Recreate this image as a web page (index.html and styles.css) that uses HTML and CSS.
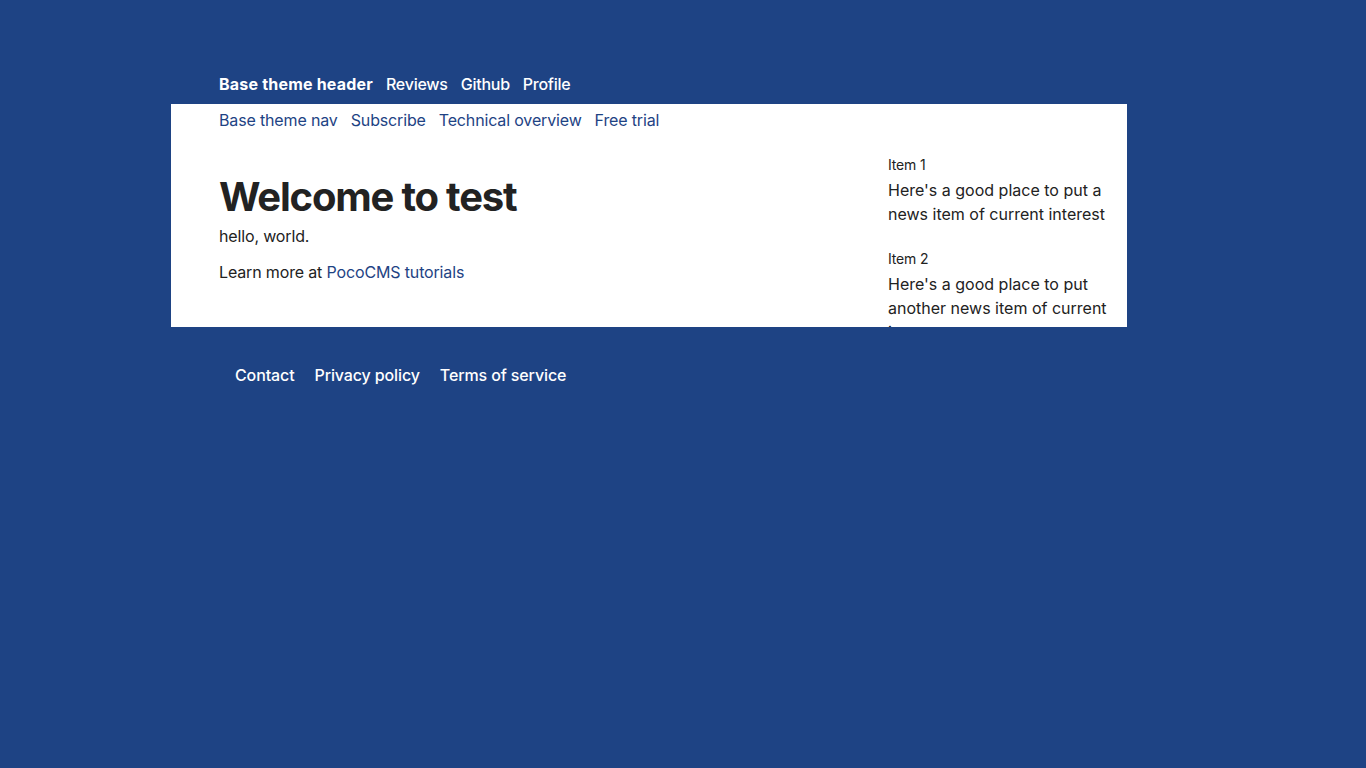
FILE: index.html
```html
<!DOCTYPE html>
<html lang="en">
<head>
  <meta charset="UTF-8" />
  <meta name="viewport" content="width=device-width, initial-scale=1.0"/>
  <title>Welcome to test</title>
  <link rel="stylesheet" href="styles.css">
</head>
<body>
  <div class="page">
    <header class="site-header">
      <a href="#" class="brand">Base theme header</a>
      <a href="#">Reviews</a>
      <a href="#">Github</a>
      <a href="#">Profile</a>
    </header>

    <div class="sheet">
      <nav class="site-nav">
        <a href="#">Base theme nav</a>
        <a href="#">Subscribe</a>
        <a href="#">Technical overview</a>
        <a href="#">Free trial</a>
      </nav>
      <div class="columns">
        <article class="main">
          <h1>Welcome to test</h1>
          <p>hello, world.</p>
          <p>Learn more at <a href="#">PocoCMS tutorials</a></p>
        </article>
        <aside class="news">
          <h4>Item 1</h4>
          <p>Here's a good place to put a news item of current interest</p>
          <h4>Item 2</h4>
          <p>Here's a good place to put another news item of current interest</p>
        </aside>
      </div>
    </div>

    <footer class="site-footer">
      <a href="#">Contact</a>
      <a href="#">Privacy policy</a>
      <a href="#">Terms of service</a>
    </footer>
  </div>
</body>
</html>
```

FILE: styles.css
```css
body {
  background: #1e4384;
  font-family: Inter, "Noto Sans", sans-serif;
  font-size: 16px;
  line-height: 24px;
  letter-spacing: -0.15px;
  color: #222;
  margin: 0;
}

a {
  text-decoration: none;
}

.page {
  width: 1024px;
  margin: 0 auto;
}

.site-header {
  display: flex;
  gap: 13px;
  padding: 72px 0 8px 48px;
}

.site-header a {
  color: #fff;
  font-weight: 500;
  letter-spacing: -0.25px;
}

.site-header .brand {
  font-weight: 700;
  letter-spacing: 0.2px;
}

.sheet {
  background: #fff;
  width: 956px;
  height: 223px;
  overflow: hidden;
}

.site-nav {
  display: flex;
  gap: 13px;
  padding: 4px 0 0 48px;
}

.site-nav a,
.main a {
  color: #1e4384;
}

.columns {
  display: grid;
  grid-template-columns: 1fr 224px;
  gap: 48px;
  padding: 0 15px 0 48px;
}

.main h1 {
  font-size: 40px;
  line-height: 48px;
  font-weight: 700;
  letter-spacing: -1.2px;
  margin: 41px 0 3px;
  color: #222;
}

.main p {
  margin: 0 0 12px;
}

.news {
  padding-top: 23px;
}

.news h4 {
  font-size: 14px;
  line-height: 20px;
  font-weight: 400;
  margin: 0 0 3px;
}

.news p {
  margin: 0 0 23px;
  letter-spacing: 0;
}

.site-footer {
  display: flex;
  gap: 20px;
  padding: 36px 0 0 64px;
}

.site-footer a {
  color: #fff;
  font-weight: 500;
  letter-spacing: -0.12px;
}
```
